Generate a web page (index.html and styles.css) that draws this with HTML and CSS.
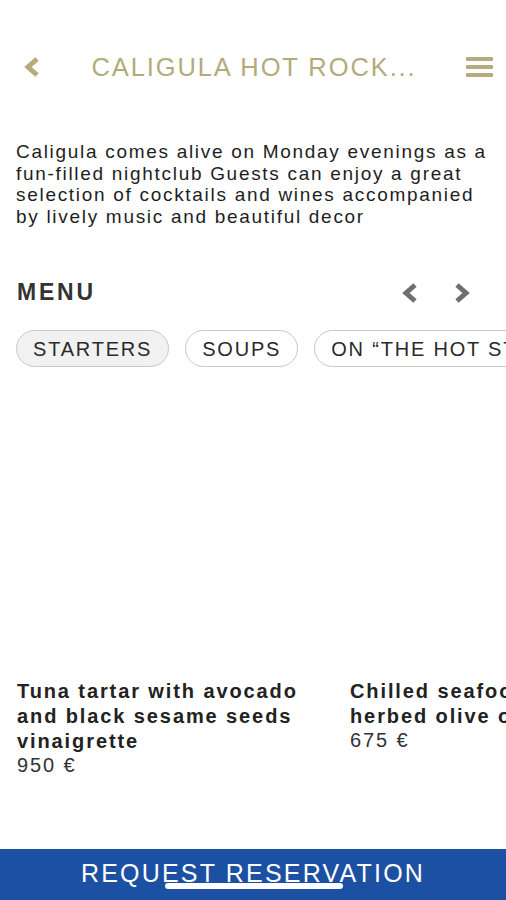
FILE: index.html
```html
<!DOCTYPE html>
<html lang="en">
<head>
    <meta charset="UTF-8">
    <meta name="viewport" content="width=device-width, initial-scale=1.0">
    <title>Caligula Hot Rocks</title>
    <link rel="stylesheet" href="styles.css">
</head>
<body>
    <div class="page">
        <header class="topbar">
            <button class="icon-btn back">
                <svg width="20" height="22" viewBox="0 0 20 22"><path d="M15 3 L6 11 L15 19" fill="none" stroke="#b3ab7c" stroke-width="5" stroke-linejoin="miter"/></svg>
            </button>
            <h1 class="title">CALIGULA HOT ROCK...</h1>
            <button class="icon-btn burger">
                <span></span><span></span><span></span>
            </button>
        </header>

        <p class="intro">Caligula comes alive on Monday evenings as a <span class="nowrap">fun-filled</span> nightclub Guests can enjoy a great selection of cocktails and wines accompanied by lively music and beautiful decor</p>

        <div class="menu-head">
            <h2>MENU</h2>
            <div class="arrows">
                <svg width="20" height="22" viewBox="0 0 20 22"><path d="M15 3 L6 11 L15 19" fill="none" stroke="#6f6f6f" stroke-width="5"/></svg>
                <svg width="20" height="22" viewBox="0 0 20 22"><path d="M5 3 L14 11 L5 19" fill="none" stroke="#6f6f6f" stroke-width="5"/></svg>
            </div>
        </div>

        <div class="chips">
            <span class="chip active">STARTERS</span>
            <span class="chip">SOUPS</span>
            <span class="chip">ON “THE HOT STONE”</span>
        </div>

        <div class="dishes">
            <div class="dish">
                <div class="dish-img"></div>
                <div class="dish-name">Tuna tartar with avocado and black sesame seeds vinaigrette</div>
                <div class="dish-price">950 €</div>
            </div>
            <div class="dish">
                <div class="dish-img"></div>
                <div class="dish-name">Chilled seafood salad with herbed olive oil</div>
                <div class="dish-price">675 €</div>
            </div>
        </div>
    </div>

    <footer class="reserve">
        <span>REQUEST RESERVATION</span>
        <div class="home-bar"></div>
    </footer>
</body>
</html>
```

FILE: styles.css
```css
body { margin: 0; background: #fff; font-family: 'Liberation Sans', Arial, sans-serif; color: #222; width: 506px; height: 900px; overflow: hidden; position: relative; }
.page { padding: 0 16px; }
.nowrap { white-space: nowrap; }
.topbar { display: flex; align-items: center; justify-content: space-between; height: 40px; margin-top: 47px; }
.icon-btn { background: none; border: 0; padding: 0; display: flex; }
.back { margin-left: 6px; }
.title { margin: 0; font-weight: normal; font-size: 25.5px; color: #b3ab7c; letter-spacing: 1.9px; flex: 1; text-align: center; padding-left: 0; white-space: nowrap; }
.burger { flex-direction: column; gap: 4px; width: 27px; margin-right: -3px; }
.burger span { display: block; height: 4px; background: #b3ab7c; border-radius: 1px; }
.intro { margin: 54px 0 0; font-size: 19px; line-height: 21.5px; letter-spacing: 1.7px; color: #1e1e1e; }
.menu-head { display: flex; align-items: center; justify-content: space-between; margin-top: 52px; }
.menu-head h2 { margin: 0 0 0 1px; font-size: 23px; font-weight: bold; color: #333; letter-spacing: 2.8px; }
.arrows { display: flex; gap: 32px; margin-right: 18px; }
.chips { display: flex; gap: 16px; margin-top: 24px; white-space: nowrap; overflow: hidden; margin-right: -16px; }
.chip { flex: none; border: 1px solid #c8c8c8; border-radius: 19px; height: 35px; line-height: 36px; padding: 0 16px; font-size: 20px; color: #2a2a2a; letter-spacing: 1.8px; }
.chip.active { background: #f1f1f1; }
.dishes { display: flex; gap: 16px; margin-top: 7px; margin-right: -16px; overflow: hidden; }
.dish { flex: none; width: 316px; margin-left: 1px; }
.dish-img { height: 305px; }
.dish-name { font-size: 20px; font-weight: bold; line-height: 25px; color: #222; letter-spacing: 1.9px; }
.dish-price { font-size: 20px; line-height: 22px; color: #333; letter-spacing: 1.9px; }
.reserve { position: absolute; left: 0; right: 0; bottom: 0; height: 51px; background: #1c50a3; color: #fff; display: flex; justify-content: center; align-items: center; font-size: 25px; letter-spacing: 2.2px; }
.reserve span { margin-bottom: 2px; }
.home-bar { position: absolute; left: 165px; width: 178px; bottom: 11px; height: 6px; border-radius: 3px; background: #fff; }
```
